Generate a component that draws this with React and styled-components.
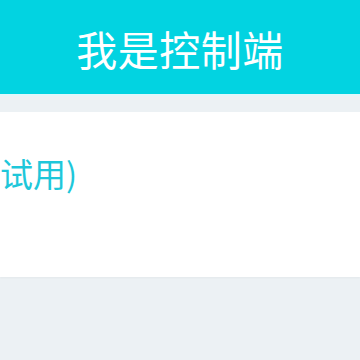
import React from "react";
import styled, { createGlobalStyle } from "styled-components";

const GlobalStyle = createGlobalStyle`
  html, body {
    margin: 0;
    padding: 0;
    background: #ecf1f4;
    font-family: "Noto Sans CJK SC", "Noto Sans", sans-serif;
  }
  #root {
    min-height: 100vh;
  }
`;

const Page = styled.div`
  display: flex;
  flex-direction: column;
  min-height: 360px;
  background: #ecf1f4;
  overflow: hidden;
`;

const Header = styled.header`
  height: 94px;
  background: #02d3e1;
  display: flex;
  align-items: center;
  justify-content: center;
  border-bottom: 2px solid #dff7fa;
`;

const Title = styled.h1`
  margin: 0;
  color: #ffffff;
  font-size: 41px;
  font-weight: 400;
  letter-spacing: 0.5px;
  line-height: 1;
  padding-top: 2px;
`;

const Card = styled.section`
  margin-top: 16px;
  height: 165px;
  background: #ffffff;
  box-shadow: 0 1px 2px rgba(0, 0, 0, 0.04);
  display: flex;
  align-items: flex-start;
`;

const Label = styled.span`
  margin-top: 45px;
  color: #1ec7da;
  font-size: 33px;
  line-height: 1;
  white-space: nowrap;
`;

export default function App() {
  return (
    <>
      <GlobalStyle />
      <Page>
        <Header>
          <Title>我是控制端</Title>
        </Header>
        <Card>
          <Label>试用)</Label>
        </Card>
      </Page>
    </>
  );
}
